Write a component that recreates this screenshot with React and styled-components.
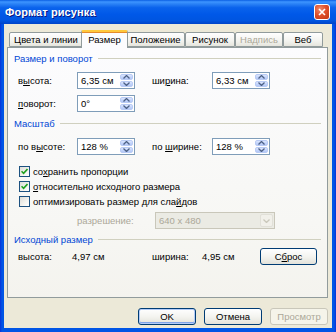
import React from "react";
import styled, { createGlobalStyle } from "styled-components";

const GlobalStyle = createGlobalStyle`
  html, body {
    margin: 0;
    padding: 0;
    width: 336px;
    height: 332px;
    overflow: hidden;
    background: #ECE9D8;
  }
  * { box-sizing: border-box; }
  body {
    font-family: "Liberation Sans", Arial, sans-serif;
    font-size: 9px;
    color: #000;
  }
`;

const Window = styled.div`
  width: 336px;
  height: 332px;
  display: flex;
  flex-direction: column;
  background: linear-gradient(to right, #0831D9 0px, #0055E5 2px, #0055E5 calc(100% - 2px), #0831D9 100%);
`;

const TitleBar = styled.div`
  height: 24px;
  flex: none;
  display: flex;
  align-items: center;
  justify-content: space-between;
  padding: 0 6px 0 5px;
  background: linear-gradient(to bottom, #0A5FE3 0%, #3D95FF 8%, #2B83F6 16%, #0A63EC 32%, #0058E8 60%, #0055E0 86%, #0043C8 100%);
`;

const Title = styled.div`
  font-size: 11px;
  font-weight: bold;
  color: #fff;
  text-shadow: 1px 1px 0 #0A1883;
  letter-spacing: 0.1px;
`;

const CloseBtn = styled.div`
  width: 16px;
  height: 16px;
  border: 1px solid #fff;
  border-radius: 3px;
  background: radial-gradient(circle at 35% 30%, #F08A6A 0%, #E0512C 45%, #C2350F 100%);
  display: flex;
  align-items: center;
  justify-content: center;
`;

const Body = styled.div`
  flex: 1;
  margin: 0 4px 4px 4px;
  background: #ECE9D8;
  display: flex;
  flex-direction: column;
  padding: 5px 4px 0 3px;
`;

const TabStrip = styled.div`
  display: flex;
  align-items: flex-end;
  padding-left: 2px;
  height: 18px;
  position: relative;
  z-index: 1;
`;

const Tab = styled.div`
  width: ${(p) => p.$w}px;
  height: ${(p) => (p.$active ? 18 : 15)}px;
  margin: 0 ${(p) => (p.$active ? -2 : 0)}px ${(p) => (p.$active ? -1 : 0)}px;
  ${(p) => (p.$active ? "width: " + (p.$w + 4) + "px; z-index: 2;" : "")}
  border: 1px solid #919B9C;
  border-bottom: ${(p) => (p.$active ? "none" : "1px solid #919B9C")};
  border-top: ${(p) => (p.$active ? "2px solid #FFC83C" : "1px solid #919B9C")};
  border-radius: 2px 2px 0 0;
  background: ${(p) =>
    p.$active ? "#FCFCFE" : "linear-gradient(to bottom, #FFFFFF 0%, #F3F3EF 60%, #E6E5DD 100%)"};
  color: ${(p) => (p.$disabled ? "#ACA899" : "#000")};
  display: flex;
  align-items: center;
  justify-content: center;
  font-size: 9.5px;
  padding-bottom: ${(p) => (p.$active ? 2 : 0)}px;
  box-shadow: ${(p) => (p.$active ? "inset 0 1px 0 #E68B2C" : "none")};
`;

const Panel = styled.div`
  height: 251px;
  flex: none;
  border: 1px solid #919B9C;
  border-right-color: #919B9C;
  background: linear-gradient(to bottom, #FCFCFE 0%, #F7F7F4 70%, #F4F3EE 100%);
  padding: 4px 6px 0 6px;
  display: flex;
  flex-direction: column;
`;

const GroupHeader = styled.div`
  height: 12px;
  display: flex;
  align-items: center;
  gap: 5px;
  margin-top: ${(p) => p.$mt || 0}px;
  color: #0046D5;
  font-size: 9.5px;
  white-space: nowrap;
  &::after {
    content: "";
    flex: 1;
    height: 1px;
    background: #D0D0BF;
  }
`;

const FieldGrid = styled.div`
  display: grid;
  grid-template-columns: 59px 58px 17px 60px 58px;
  grid-auto-rows: 17px;
  row-gap: 6px;
  align-items: center;
  margin-top: ${(p) => p.$mt || 0}px;
  padding-left: 4px;
`;

const Label = styled.span`
  font-size: 9.5px;
  white-space: nowrap;
  color: ${(p) => (p.$disabled ? "#ACA899" : "#000")};
`;

const Key = styled.u`
  text-decoration: underline;
  text-underline-offset: 1px;
`;

const SpinBox = styled.div`
  height: 17px;
  border: 1px solid #7F9DB9;
  background: #fff;
  display: flex;
  align-items: stretch;
`;

const SpinText = styled.div`
  flex: 1;
  padding-left: 3px;
  display: flex;
  align-items: center;
  font-size: 9.5px;
`;

const SpinCol = styled.div`
  width: 13px;
  margin: 1px;
  display: flex;
  flex-direction: column;
  gap: 1px;
`;

const SpinHalf = styled.div`
  flex: 1;
  border-radius: 2px;
  border: 1px solid #B9CBF5;
  background: linear-gradient(to bottom, #DCE6FD 0%, #C4D5FB 50%, #B3C7F6 100%);
  display: flex;
  align-items: center;
  justify-content: center;
`;

const CheckList = styled.div`
  display: flex;
  flex-direction: column;
  margin-top: 9px;
  padding-left: 5px;
`;

const CheckRow = styled.div`
  height: 15px;
  display: flex;
  align-items: center;
  gap: 3px;
  font-size: 9.5px;
  white-space: nowrap;
`;

const CheckBox = styled.div`
  width: 11px;
  height: 11px;
  border: 1px solid #1C5180;
  background: linear-gradient(135deg, #DCDCD7 0%, #F4F4F0 60%, #FFFFFF 100%);
  display: flex;
  align-items: center;
  justify-content: center;
`;

const ResRow = styled.div`
  display: grid;
  grid-template-columns: 78px 120px;
  align-items: center;
  height: 17px;
  margin-top: 3px;
  padding-left: 63px;
`;

const Combo = styled.div`
  height: 17px;
  border: 1px solid #C9C7BA;
  background: #EBEBE4;
  display: flex;
  align-items: stretch;
`;

const ComboText = styled.div`
  flex: 1;
  padding-left: 3px;
  display: flex;
  align-items: center;
  color: #ACA899;
  font-size: 9.5px;
`;

const ComboBtn = styled.div`
  width: 13px;
  margin: 1px;
  border-radius: 2px;
  border: 1px solid #E1E0D8;
  background: #F1F0EA;
  display: flex;
  align-items: center;
  justify-content: center;
`;

const OrigRow = styled.div`
  display: grid;
  grid-template-columns: 54px 80px 50px 58px 57px;
  grid-auto-rows: 17px;
  align-items: center;
  margin-top: 3px;
  padding-left: 4px;
`;

const Button = styled.div`
  width: ${(p) => p.$w || 58}px;
  height: 17px;
  border: 1px solid ${(p) => (p.$disabled ? "#C9C7BA" : "#003C74")};
  border-radius: 3px;
  background: ${(p) =>
    p.$disabled ? "#F5F4EA" : "linear-gradient(to bottom, #FFFFFF 0%, #F4F4F0 50%, #E3E2DA 100%)"};
  color: ${(p) => (p.$disabled ? "#ACA899" : "#000")};
  display: flex;
  align-items: center;
  justify-content: center;
  font-size: 9.5px;
  box-shadow: ${(p) =>
    p.$default ? "inset 0 0 0 1px #B3CCF8, inset 0 -1px 0 1px #7EA3E8" : "none"};
`;

const Footer = styled.div`
  display: flex;
  justify-content: flex-end;
  gap: 8px;
  margin-top: 10px;
`;

const Arrow = ({ up, color = "#4D6185" }) => (
  <svg width="7" height="4" viewBox="0 0 7 4">
    <path
      d={up ? "M0.5 3.5 L3.5 0.5 L6.5 3.5" : "M0.5 0.5 L3.5 3.5 L6.5 0.5"}
      fill="none"
      stroke={color}
      strokeWidth="1.3"
    />
  </svg>
);

const Spin = ({ value }) => (
  <SpinBox>
    <SpinText>{value}</SpinText>
    <SpinCol>
      <SpinHalf>
        <Arrow up />
      </SpinHalf>
      <SpinHalf>
        <Arrow />
      </SpinHalf>
    </SpinCol>
  </SpinBox>
);

const Check = ({ checked, children }) => (
  <CheckRow>
    <CheckBox>
      {checked && (
        <svg width="7" height="7" viewBox="0 0 7 7">
          <path d="M0.5 3.2 L2.6 5.4 L6.5 1" fill="none" stroke="#21A121" strokeWidth="1.6" />
        </svg>
      )}
    </CheckBox>
    <span>{children}</span>
  </CheckRow>
);

const tabs = [
  { label: "Цвета и линии", w: 74 },
  { label: "Размер", w: 43, active: true },
  { label: "Положение", w: 59 },
  { label: "Рисунок", w: 50 },
  { label: "Надпись", w: 48, disabled: true },
  { label: "Веб", w: 40 },
];

export default function App() {
  return (
    <>
      <GlobalStyle />
      <Window>
        <TitleBar>
          <Title>Формат рисунка</Title>
          <CloseBtn>
            <svg width="8" height="8" viewBox="0 0 8 8">
              <path d="M1 1 L7 7 M7 1 L1 7" stroke="#fff" strokeWidth="1.6" />
            </svg>
          </CloseBtn>
        </TitleBar>
        <Body>
          <TabStrip>
            {tabs.map((t) => (
              <Tab key={t.label} $w={t.w} $active={t.active} $disabled={t.disabled}>
                {t.label}
              </Tab>
            ))}
          </TabStrip>
          <Panel>
            <GroupHeader>Размер и поворот</GroupHeader>
            <FieldGrid $mt={8}>
              <Label>
                в<Key>ы</Key>сота:
              </Label>
              <Spin value="6,35 см" />
              <span />
              <Label>
                ши<Key>р</Key>ина:
              </Label>
              <Spin value="6,33 см" />
              <Label>
                <Key>п</Key>оворот:
              </Label>
              <Spin value="0°" />
            </FieldGrid>

            <GroupHeader $mt={5}>Масштаб</GroupHeader>
            <FieldGrid $mt={9}>
              <Label>
                по в<Key>ы</Key>соте:
              </Label>
              <Spin value="128 %" />
              <span />
              <Label>
                по <Key>ш</Key>ирине:
              </Label>
              <Spin value="128 %" />
            </FieldGrid>
            <CheckList>
              <Check checked>
                со<Key>х</Key>ранить пропорции
              </Check>
              <Check checked>
                <Key>о</Key>тносительно исходного размера
              </Check>
              <Check>
                оптимизировать размер для сла<Key>й</Key>дов
              </Check>
            </CheckList>
            <ResRow>
              <Label $disabled>разрешение:</Label>
              <Combo>
                <ComboText>640 x 480</ComboText>
                <ComboBtn>
                  <Arrow color="#C9C7BA" />
                </ComboBtn>
              </Combo>
            </ResRow>

            <GroupHeader $mt={4}>Исходный размер</GroupHeader>
            <OrigRow>
              <Label>высота:</Label>
              <Label>4,97 см</Label>
              <Label>ширина:</Label>
              <Label>4,95 см</Label>
              <Button $w={57}>
                С<Key>б</Key>рос
              </Button>
            </OrigRow>
          </Panel>
          <Footer>
            <Button $default>OK</Button>
            <Button>Отмена</Button>
            <Button $disabled>Просмотр</Button>
          </Footer>
        </Body>
      </Window>
    </>
  );
}
